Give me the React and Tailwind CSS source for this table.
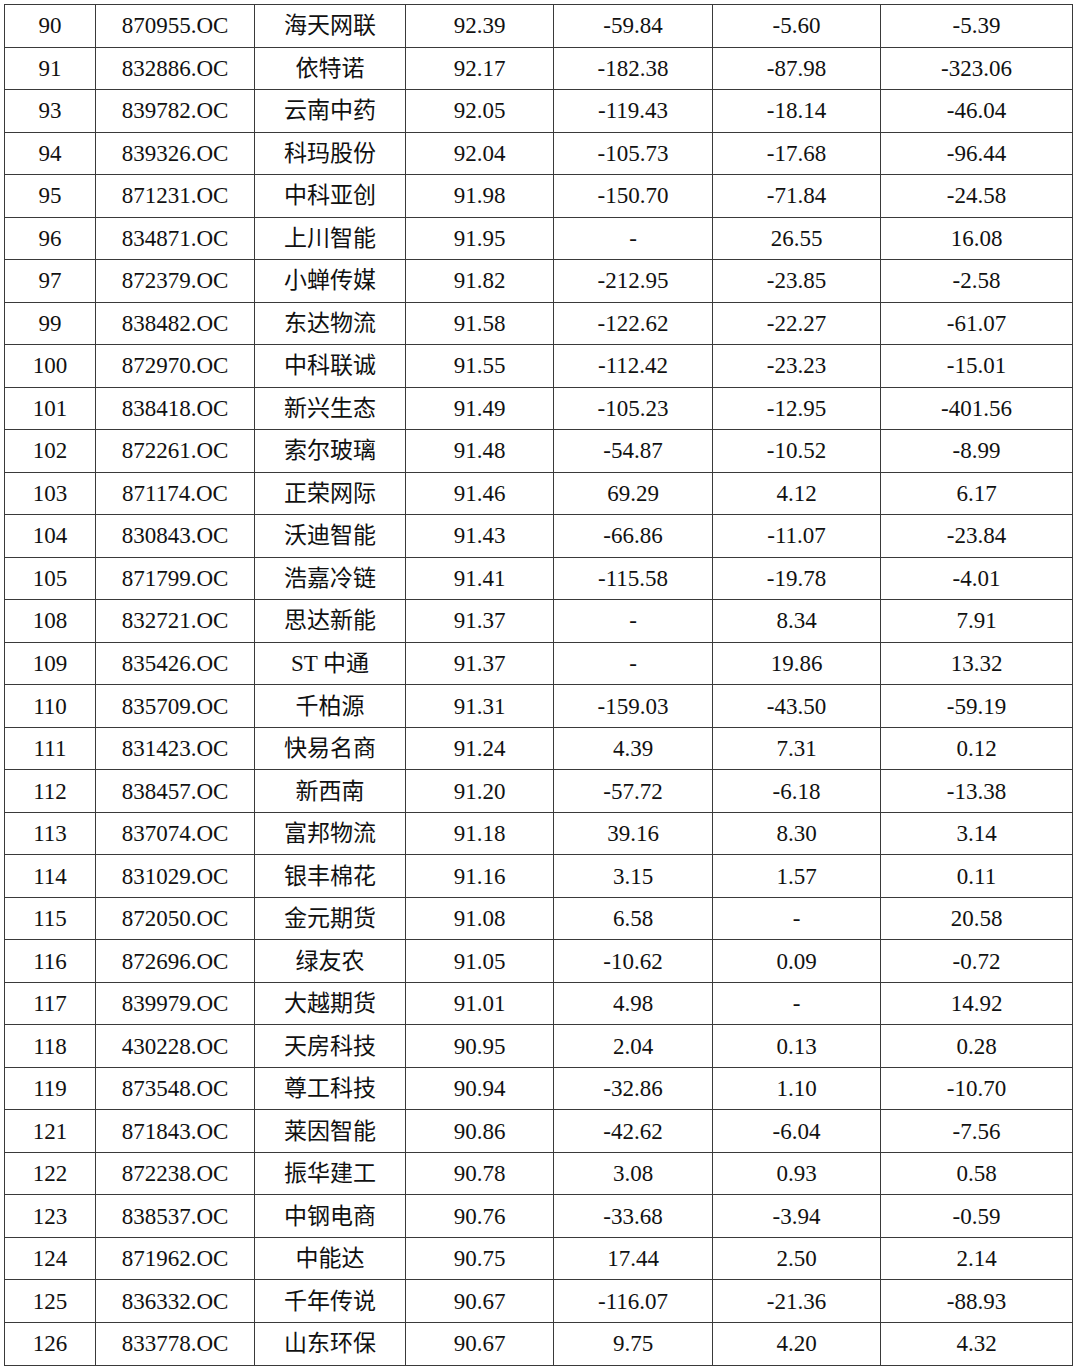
const rows = [
  ['90', '870955.OC', '海天网联', '92.39', '-59.84', '-5.60', '-5.39'],
  ['91', '832886.OC', '依特诺', '92.17', '-182.38', '-87.98', '-323.06'],
  ['93', '839782.OC', '云南中药', '92.05', '-119.43', '-18.14', '-46.04'],
  ['94', '839326.OC', '科玛股份', '92.04', '-105.73', '-17.68', '-96.44'],
  ['95', '871231.OC', '中科亚创', '91.98', '-150.70', '-71.84', '-24.58'],
  ['96', '834871.OC', '上川智能', '91.95', '-', '26.55', '16.08'],
  ['97', '872379.OC', '小蝉传媒', '91.82', '-212.95', '-23.85', '-2.58'],
  ['99', '838482.OC', '东达物流', '91.58', '-122.62', '-22.27', '-61.07'],
  ['100', '872970.OC', '中科联诚', '91.55', '-112.42', '-23.23', '-15.01'],
  ['101', '838418.OC', '新兴生态', '91.49', '-105.23', '-12.95', '-401.56'],
  ['102', '872261.OC', '索尔玻璃', '91.48', '-54.87', '-10.52', '-8.99'],
  ['103', '871174.OC', '正荣网际', '91.46', '69.29', '4.12', '6.17'],
  ['104', '830843.OC', '沃迪智能', '91.43', '-66.86', '-11.07', '-23.84'],
  ['105', '871799.OC', '浩嘉冷链', '91.41', '-115.58', '-19.78', '-4.01'],
  ['108', '832721.OC', '思达新能', '91.37', '-', '8.34', '7.91'],
  ['109', '835426.OC', 'ST 中通', '91.37', '-', '19.86', '13.32'],
  ['110', '835709.OC', '千柏源', '91.31', '-159.03', '-43.50', '-59.19'],
  ['111', '831423.OC', '快易名商', '91.24', '4.39', '7.31', '0.12'],
  ['112', '838457.OC', '新西南', '91.20', '-57.72', '-6.18', '-13.38'],
  ['113', '837074.OC', '富邦物流', '91.18', '39.16', '8.30', '3.14'],
  ['114', '831029.OC', '银丰棉花', '91.16', '3.15', '1.57', '0.11'],
  ['115', '872050.OC', '金元期货', '91.08', '6.58', '-', '20.58'],
  ['116', '872696.OC', '绿友农', '91.05', '-10.62', '0.09', '-0.72'],
  ['117', '839979.OC', '大越期货', '91.01', '4.98', '-', '14.92'],
  ['118', '430228.OC', '天房科技', '90.95', '2.04', '0.13', '0.28'],
  ['119', '873548.OC', '尊工科技', '90.94', '-32.86', '1.10', '-10.70'],
  ['121', '871843.OC', '莱因智能', '90.86', '-42.62', '-6.04', '-7.56'],
  ['122', '872238.OC', '振华建工', '90.78', '3.08', '0.93', '0.58'],
  ['123', '838537.OC', '中钢电商', '90.76', '-33.68', '-3.94', '-0.59'],
  ['124', '871962.OC', '中能达', '90.75', '17.44', '2.50', '2.14'],
  ['125', '836332.OC', '千年传说', '90.67', '-116.07', '-21.36', '-88.93'],
  ['126', '833778.OC', '山东环保', '90.67', '9.75', '4.20', '4.32'],
]

const widths = ['w-[91px]', 'w-[159px]', 'w-[151px]', 'w-[148px]', 'w-[159px]', 'w-[168px]', 'w-[192px]']

export default function App() {
  return (
    <div className="min-h-[1369px] w-[1080px] bg-white pl-[4px] pt-[4px]">
      <table
        className="w-[1068px] table-fixed border-collapse text-[23px] leading-none text-[#111]"
        style={{ fontFamily: '"Liberation Serif", "Noto Sans CJK SC", serif' }}
      >
        <colgroup>
          {widths.map((w, i) => (
            <col key={i} className={w} />
          ))}
        </colgroup>
        <tbody>
          {rows.map((row) => (
            <tr key={row[0]} className="h-[42.53px]">
              {row.map((cell, i) => (
                <td
                  key={i}
                  className="border-[1.5px] border-[#3a3a3a] p-0 text-center align-middle"
                >
                  {cell}
                </td>
              ))}
            </tr>
          ))}
        </tbody>
      </table>
    </div>
  )
}
